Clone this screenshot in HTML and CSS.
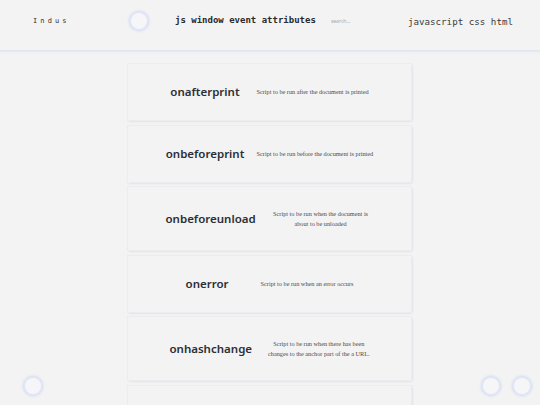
FILE: index.html
```html
<!DOCTYPE html>
<html>
<head>
<meta charset="utf-8">
<link rel="stylesheet" href="styles.css">
</head>
<body>
<header class="topbar">
  <div class="brand">Indus</div>
  <div class="knob knob-head"></div>
  <h1 class="title">js window event attributes</h1>
  <input class="search" type="text" placeholder="search...">
  <nav class="tags">javascript css html</nav>
</header>
<main class="list">
  <div class="card"><div class="name">onafterprint</div><div class="desc">Script to be run after the document is printed</div></div>
  <div class="card"><div class="name">onbeforeprint</div><div class="desc">Script to be run before the document is printed</div></div>
  <div class="card"><div class="name">onbeforeunload</div><div class="desc">Script to be run when the document is about to be unloaded</div></div>
  <div class="card"><div class="name">onerror</div><div class="desc">Script to be run when an error occurs</div></div>
  <div class="card"><div class="name">onhashchange</div><div class="desc">Script to be run when there has been<br>changes to the anchor part of the a URL.</div></div>
  <div class="card card-empty"></div>
</main>
<div class="knob knob-bl"></div>
<div class="knob knob-br1"></div>
<div class="knob knob-br2"></div>
</body>
</html>
```
FILE: styles.css
```css
html, body {
  margin: 0;
  padding: 0;
  background: #f3f3f3;
  overflow: hidden;
}
body {
  font-family: "Noto Sans", sans-serif;
  color: #2b2e36;
}
.topbar {
  height: 42px;
  padding-bottom: 8px;
  display: flex;
  align-items: center;
  box-shadow: 0 1px 0 #dfe4f0, 0 2px 2px rgba(210,218,236,0.5);
  background: #f3f3f3;
}
.brand {
  margin-left: 33px;
  font-family: "DejaVu Sans Mono", monospace;
  font-size: 7px;
  letter-spacing: 3.1px;
  color: #333;
  width: 98px;
}
.knob {
  width: 16px;
  height: 16px;
  border-radius: 50%;
  background: #f6f6f8;
  box-shadow: 0 0 0 1.5px #e0e6f6, 0 0 3px 2px #cbd6f3;
}
.knob-head {
  flex: none;
}
.title {
  margin: 0 0 3px 28px;
  font-family: "DejaVu Sans Mono", monospace;
  font-weight: bold;
  font-size: 9px;
  color: #2a2a2a;
  white-space: nowrap;
}
.search {
  margin-left: 15px;
  width: 60px;
  border: none;
  background: transparent;
  font-family: "Noto Sans", sans-serif;
  font-size: 5px;
  padding: 0;
  outline: none;
}
.search::placeholder {
  color: #a8a8a8;
}
.tags {
  margin-left: 17px;
  font-family: "DejaVu Sans Mono", monospace;
  font-size: 9.2px;
  color: #3a3a3a;
  white-space: nowrap;
}
.list {
  width: 283px;
  margin: 14px 0 0 128px;
  display: flex;
  flex-direction: column;
  gap: 5.5px;
}
.card {
  display: flex;
  justify-content: space-evenly;
  align-items: center;
  padding: 22px 31.5px;
  min-height: 12px;
  background: #f3f3f3;
  box-shadow: 0 0 0 1px #ececee, 1px 1px 2px rgba(196,205,232,0.9);
}
.name {
  flex: none;
  margin: 0 6px;
  font-family: "Noto Sans", sans-serif;
  font-weight: 600;
  font-size: 11.5px;
  line-height: 12px;
  color: #2b2e36;
  white-space: nowrap;
}
.desc {
  flex: 0 1 auto;
  min-width: 0;
  margin: 0 6px;
  font-family: "Liberation Serif", serif;
  font-size: 6.25px;
  line-height: 9.5px;
  color: #4a4a4a;
  text-align: center;
}
.knob-bl, .knob-br1, .knob-br2 {
  position: fixed;
  top: 378px;
}
.knob-bl { left: 25px; }
.knob-br1 { left: 483px; }
.knob-br2 { left: 514px; }
```
